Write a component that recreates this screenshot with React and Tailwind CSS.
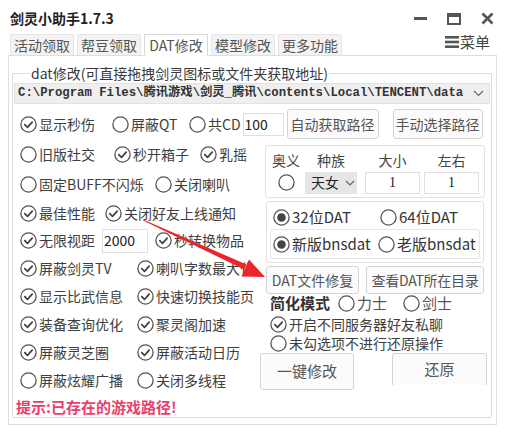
import React from 'react';

const FONT = 'font-["Noto_Sans_CJK_SC","Noto_Sans",sans-serif]';

function Circ({ mark }) {
  return (
    <svg width="17" height="17" viewBox="0 0 17 17" className="shrink-0">
      <circle cx="8.5" cy="8.5" r="7.6" fill="white" stroke="#555" strokeWidth="1.3" />
      {mark === 'check' && (
        <path d="M4.8 8.7 L7.5 11.3 L12.2 6.2" fill="none" stroke="#444" strokeWidth="1.8" strokeLinecap="round" strokeLinejoin="round" />
      )}
      {mark === 'dot' && <circle cx="8.5" cy="8.5" r="4.3" fill="#444" />}
    </svg>
  );
}

function Opt({ mark, label, className = '' }) {
  return (
    <div className={'flex items-center gap-[2px] shrink-0 whitespace-nowrap ' + className}>
      <Circ mark={mark} />
      <span>{label}</span>
    </div>
  );
}

function Btn({ children, className = '' }) {
  return (
    <div className={'flex items-center justify-center whitespace-nowrap bg-[#fbfbfb] border border-[#d4d4d4] rounded-[3px] text-[#555] text-[14px] shrink-0 ' + className}>
      {children}
    </div>
  );
}

const tabs = ['活动领取', '帮豆领取', 'DAT修改', '模型修改', '更多功能'];

export default function App() {
  return (
    <div className={'relative w-[509px] h-[432px] bg-white overflow-hidden text-[#3e3e3e] ' + FONT}>
      {/* title bar */}
      <div className="flex items-center justify-between h-[33px] pl-[10px] pr-[15px]">
        <div className="text-[14px] font-bold text-[#222] mt-[3px]">剑灵小助手1.7.3</div>
        <div className="flex items-center gap-[20px] mt-[4px]">
          <div className="w-[13px] h-[3px] bg-[#555]" />
          <div className="w-[14px] h-[12px] border-2 border-t-[4px] border-[#555]" />
          <svg width="13" height="13" viewBox="0 0 13 13">
            <path d="M1.5 1.5 L11.5 11.5 M11.5 1.5 L1.5 11.5" stroke="#555" strokeWidth="2.6" />
          </svg>
        </div>
      </div>

      {/* tabs */}
      <div className="flex items-end h-[22px] pl-[10px] pr-[19px]">
        {tabs.map((t, i) => (
          <div
            key={t}
            className={
              'h-[21px] w-[64px] mr-[3px] flex items-center justify-center text-[14px] text-[#555] border border-b-0 ' +
              (i === 2 ? 'bg-white border-[#d8d8d8] h-[22px] relative top-[1px]' : 'bg-[#f3f3f3] border-[#e6e6e6]')
            }
          >
            {t}
          </div>
        ))}
        <div className="ml-auto flex items-center gap-[1px] self-start -mt-[2px] text-[15px] text-[#444]">
          <svg width="14" height="12" viewBox="0 0 14 12">
            <rect x="0" y="0" width="14" height="2.6" fill="#555" />
            <rect x="0" y="4.7" width="14" height="2.6" fill="#555" />
            <rect x="0" y="9.4" width="14" height="2.6" fill="#555" />
          </svg>
          <span>菜单</span>
        </div>
      </div>

      {/* tab panel */}
      <div className="ml-[8px] w-[489px] h-[370px] border border-[#dedede] pt-[7px]">
        <fieldset className="ml-[3px] w-[480px] h-[355px] border border-[#dcdcdc] rounded-[2px] px-[1px]">
          <legend className="ml-[16px] px-[1px] text-[14px] text-[#3a3a3a] leading-[20px]">
            dat修改(可直接拖拽剑灵图标或文件夹获取地址)
          </legend>

          {/* path combobox */}
          <div className="h-[21px] bg-[#efefef] border border-[#e2e2e2] flex items-center pl-[3px] pr-[5px]">
            <span className='flex-1 truncate text-[12.3px] font-bold text-[#333] font-["Liberation_Mono","Noto_Sans_CJK_SC",monospace]'>
              C:\Program Files\腾讯游戏\剑灵_腾讯\contents\Local\TENCENT\data
            </span>
            <svg width="11" height="7" viewBox="0 0 11 7" className="ml-[6px]">
              <path d="M1 1 L5.5 5.5 L10 1" fill="none" stroke="#666" strokeWidth="1.2" />
            </svg>
          </div>

          {/* row 1 */}
          <div className="flex items-center h-[32px] mt-[4px] pl-[6px] text-[14px]">
            <Opt mark="check" label="显示秒伤" className="w-[92px]" />
            <Opt label="屏蔽QT" className="w-[77px]" />
            <Opt label="共CD" />
            <div className="ml-[2px] w-[41px] h-[23px] border border-[#e0e0e0] flex items-center pl-[1px] text-[#222]">100</div>
            <Btn className="ml-[3px] w-[92px] h-[30px]">自动获取路径</Btn>
            <Btn className="ml-[14px] w-[90px] h-[30px]">手动选择路径</Btn>
          </div>

          <div className="flex">
            {/* left column */}
            <div className="w-[244px] pl-[6px] text-[14px]">
              <div className="flex items-center h-[29px]">
                <Opt label="旧版社交" className="w-[94px]" />
                <Opt mark="check" label="秒开箱子" className="w-[86px]" />
                <Opt mark="check" label="乳摇" />
              </div>
              <div className="flex items-center h-[30px]">
                <Opt label="固定BUFF不闪烁" className="w-[135px]" />
                <Opt label="关闭喇叭" />
              </div>
              <div className="flex items-center h-[28px]">
                <Opt mark="check" label="最佳性能" className="w-[85px]" />
                <Opt mark="check" label="关闭好友上线通知" />
              </div>
              <div className="flex items-center h-[27px]">
                <Opt mark="check" label="无限视距" className="w-[82px]" />
                <div className="w-[46px] h-[24px] border border-[#e0e0e0] flex items-center pl-[1px] text-[#222]">2000</div>
                <Opt mark="check" label="秒转换物品" className="ml-[7px]" />
              </div>
              {[
                ['check', '屏蔽剑灵TV', 'check', '喇叭字数最大化'],
                ['check', '显示比武信息', 'check', '快速切换技能页'],
                ['check', '装备查询优化', 'check', '聚灵阁加速'],
                ['check', '屏蔽灵芝圈', 'check', '屏蔽活动日历'],
                [null, '屏蔽炫耀广播', null, '关闭多线程'],
              ].map(([m1, a, m2, b]) => (
                <div key={a} className="flex items-center h-[28px]">
                  <Opt mark={m1} label={a} className="w-[117px]" />
                  <Opt mark={m2} label={b} />
                </div>
              ))}
              <div className="flex items-center h-[26px] -ml-[4px] text-[15px] font-bold text-[#ec3d6c]">
                提示:已存在的游戏路径!
              </div>
            </div>

            {/* right column */}
            <div className="w-[231px] text-[14px]">
              <div className="ml-[7px] mt-[5px] w-[220px] h-[53px] border border-[#e2e2e2] rounded-[3px] pl-[4px] pt-[3px]">
                <div className="flex h-[22px] items-center text-[14px] text-[#444]">
                  <div className="w-[32px] text-center">奥义</div>
                  <div className="ml-[3px] w-[52px] text-center">种族</div>
                  <div className="ml-[8px] w-[55px] text-center">大小</div>
                  <div className="ml-[4px] w-[55px] text-center">左右</div>
                </div>
                <div className="flex h-[23px] items-center">
                  <div className="w-[32px] flex justify-center">
                    <Circ />
                  </div>
                  <div className="ml-[3px] w-[52px] h-[22px] bg-[#e6e6e6] flex items-center pl-[6px] text-[#222]">
                    <span>天女</span>
                    <svg width="10" height="6" viewBox="0 0 10 6" className="ml-[6px]">
                      <path d="M1 1 L5 5 L9 1" fill="none" stroke="#666" strokeWidth="1.2" />
                    </svg>
                  </div>
                  <div className="ml-[8px] w-[55px] h-[22px] border border-[#e0e0e0] flex items-center justify-center text-[#222] font-['Liberation_Serif',serif]">1</div>
                  <div className="ml-[4px] w-[55px] h-[22px] border border-[#e0e0e0] flex items-center justify-center text-[#222] font-['Liberation_Serif',serif]">1</div>
                </div>
              </div>

              <div className="ml-[8px] mt-[3px] w-[218px] h-[62px] border border-[#e2e2e2] rounded-[3px] px-[3px] pt-[5px] text-[15px] text-[#333]">
                <div className="flex items-center h-[21px] pl-[3px]">
                  <Opt mark="dot" label="32位DAT" className="w-[107px]" />
                  <Opt label="64位DAT" />
                </div>
                <div className="mt-[1px] h-[30px] border border-[#e6e6e6] rounded-[3px] flex items-center pl-[2px]">
                  <Opt mark="dot" label="新版bnsdat" className="w-[105px]" />
                  <Opt label="老版bnsdat" />
                </div>
              </div>

              <div className="flex mt-[3px] ml-[8px]">
                <Btn className="w-[93px] h-[28px]">DAT文件修复</Btn>
                <Btn className="ml-[7px] w-[118px] h-[28px] tracking-[-0.3px]">查看DAT所在目录</Btn>
              </div>

              <div className="flex items-center h-[19px] ml-[12px] text-[15px]">
                <span className="font-bold text-[#333] w-[68px]">简化模式</span>
                <Opt label="力士" className="w-[65px] text-[#555]" />
                <Opt label="剑士" className="text-[#555]" />
              </div>
              <div className="flex items-center h-[20px] ml-[12px] mt-[1px]">
                <Opt mark="check" label="开启不同服务器好友私聊" />
              </div>
              <div className="flex items-center h-[18px] ml-[12px]">
                <Opt label="未勾选项不进行还原操作" />
              </div>
              <div className="flex items-start mt-[1px] ml-[2px]">
                <Btn className="w-[94px] h-[37px] text-[15px]">一键修改</Btn>
                <Btn className="ml-[38px] w-[95px] h-[32px] text-[15px] border-b-0 rounded-b-none">还原</Btn>
              </div>
            </div>
          </div>
        </fieldset>
      </div>

      {/* red annotation arrow */}
      <svg width="509" height="432" viewBox="0 0 509 432" className="absolute left-0 top-0 pointer-events-none">
        <polygon points="143,219.5 246.5,264.6 244.2,269.6 143,220.5" fill="#e8262b" />
        <polygon points="265,277 241.5,276.5 249,259.5" fill="#e8262b" />
      </svg>
    </div>
  );
}
